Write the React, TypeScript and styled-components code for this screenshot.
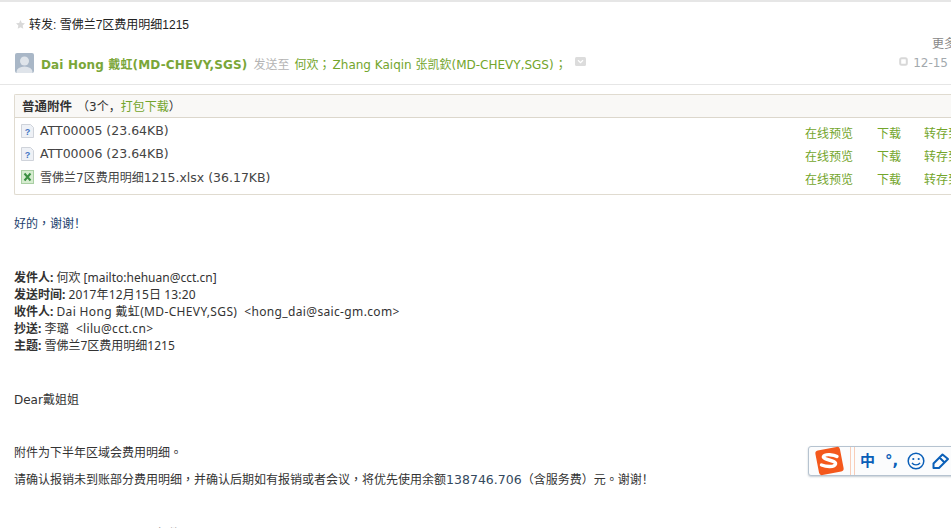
import styled, { createGlobalStyle } from "styled-components";

const GlobalStyle = createGlobalStyle`
  html, body {
    margin: 0;
    padding: 0;
    background: #fff;
    overflow: hidden;
  }
  body {
    font-family: "DejaVu Sans", "Noto Sans CJK SC", sans-serif;
    font-size: 12px;
    color: #333;
  }
`;

const Page = styled.div`
  position: relative;
  width: 951px;
  height: 528px;
  overflow: hidden;
  border-top: 2px solid #e6e6e6;
  box-sizing: border-box;
`;

const Head = styled.header`
  height: 82px;
  padding-left: 15px;
  border-bottom: 1px solid #e6e6e6;
`;

const TitleRow = styled.div`
  display: flex;
  align-items: center;
  height: 42px;
  gap: 4px;
  padding-left: 1px;
  color: #222;
  font-family: "Liberation Sans", "Noto Sans CJK SC", sans-serif;
`;

const More = styled.div`
  height: 15px;
  margin: -7px -5px 0 0;
  line-height: 15px;
  display: flex;
  justify-content: flex-end;
  color: #888;
  white-space: nowrap;
`;

const SenderRow = styled.div`
  display: flex;
  align-items: center;
  height: 22px;
  white-space: nowrap;
`;

const Avatar = styled.div`
  width: 19px;
  height: 20px;
  margin-right: 7px;
  border-radius: 2px;
  overflow: hidden;
  flex: none;
`;

const SenderName = styled.span`
  color: #7aa638;
  font-weight: 700;
  letter-spacing: 0.15px;
`;

const Gray = styled.span`
  color: #b4b4b4;
  margin-left: 6px;
`;

const Green = styled.span`
  color: #73a52c;
`;

const Recipient = styled(Green)<{ $left: number }>`
  margin-left: ${(p) => p.$left}px;
`;

const Semi = styled(Green)<{ $left: number }>`
  margin-left: ${(p) => p.$left}px;
  font-family: "Noto Sans CJK TC", sans-serif;
`;

const MailDate = styled.div`
  margin-left: auto;
  margin-right: 3px;
  display: flex;
  align-items: center;
  gap: 5px;
  color: #a3a9ad;
`;

const Attachments = styled.section`
  margin: 9px 0 0 14px;
  height: 99px;
  border: 1px solid #e0dbd0;
  border-right: none;
  border-radius: 2px 0 0 2px;
`;

const AttachHead = styled.div`
  height: 23px;
  margin-bottom: 1px;
  padding: 0 0 1px 7px;
  box-sizing: border-box;
  background: #f9f8f6;
  border-bottom: 1px solid #dcd7cc;
  display: flex;
  align-items: center;
`;

const AttachTitle = styled.strong`
  font-size: 12.5px;
  font-weight: 700;
  color: #333;
  margin-right: 5px;
`;

const AttachRow = styled.div`
  display: flex;
  align-items: center;
  height: 23px;
  padding-left: 6px;
  white-space: nowrap;
`;

const FileName = styled.span`
  margin-left: 6px;
  color: #444;
`;

const Latin = styled.span`
  font-size: 12.5px;
`;

const Actions = styled.div`
  margin-left: auto;
  margin-top: 3px;
  display: grid;
  grid-template-columns: 72px 47px 27px;
  overflow: hidden;
  color: #73a52c;
`;

const Action = styled.span`
  overflow: hidden;
`;

const Body = styled.article`
  padding: 20px 0 0 14px;
  color: #333;
`;

const Punct = styled.span`
  font-family: "Noto Sans CJK TC", sans-serif;
`;

const Reply = styled.p`
  margin: 0;
  color: #1d3f6e;
  line-height: 16px;
`;

const Meta = styled.div`
  margin-top: 37px;
  line-height: 17px;
  font-family: "Noto Sans", "Noto Sans CJK SC", sans-serif;
`;

const MetaLine = styled.div`
  white-space: nowrap;
`;

const MetaValue = styled.span<{ $spacing?: number }>`
  letter-spacing: ${(p) => p.$spacing ?? 0}px;
`;

const Para = styled.p<{ $top: number }>`
  margin: ${(p) => p.$top}px 0 0;
  line-height: 18px;
  white-space: nowrap;
`;

const Amount = styled.span`
  font-size: 12.5px;
  color: #34495e;
`;

const NextMail = styled.div`
  margin-top: 37px;
  display: flex;
  align-items: flex-start;
  padding-left: 18px;
  color: #999;
  line-height: 16px;
`;

const NextAvatar = styled.div`
  width: 12px;
  height: 12px;
  margin: 2px 88px 0 0;
  border-radius: 50%;
  background: #a8d4e4;
`;

const ImeBar = styled.div`
  position: absolute;
  left: 808px;
  top: 444px;
  width: 160px;
  height: 28px;
  display: flex;
  align-items: center;
  background: #fbfcfd;
  border: 1px solid #b6c3d0;
  border-radius: 3px;
  box-shadow: 0 1px 2px rgba(90, 110, 130, 0.35);
`;

const ImeLogoWrap = styled.div`
  width: 41px;
  height: 28px;
  display: flex;
  align-items: center;
  justify-content: center;
  flex: none;
  border-right: 1px solid #f8cdb8;
`;

const ImeRule = styled.div`
  width: 2px;
  height: 28px;
  margin-left: 1px;
  border-right: 1px solid #f8cdb8;
  flex: none;
`;

const ImeItems = styled.div`
  display: flex;
  align-items: center;
  padding-left: 5px;
  color: #0a5fb8;
`;

const ImeChar = styled.span<{ $width: number }>`
  font-weight: 700;
  font-size: 15px;
  line-height: 20px;
  width: ${(p) => p.$width}px;
`;

function AvatarIcon() {
  return (
    <svg width="19" height="20" viewBox="0 0 19 20" style={{ display: "block" }}>
      <rect width="19" height="20" fill="#a9b7c7" />
      <circle cx="9.5" cy="8" r="4.5" fill="#dfe4ea" />
      <ellipse cx="9.5" cy="19" rx="8" ry="5.5" fill="#dfe4ea" />
    </svg>
  );
}

function StarIcon() {
  return (
    <svg width="9" height="9" viewBox="0 0 10 10" style={{ marginTop: 3 }}>
      <path d="M5 0l1.5 3.3 3.5.4-2.6 2.4.7 3.6L5 8 1.9 9.7l.7-3.6L0 3.7l3.5-.4z" fill="#d9d9d9" />
    </svg>
  );
}

function FileIcon({ excel }: { excel?: boolean }) {
  if (excel) {
    return (
      <svg width="13" height="14" viewBox="0 0 13 14">
        <rect x="0.5" y="0.5" width="12" height="13" fill="#d6ecd0" stroke="#a9cfa3" />
        <path d="M3.5 3.5l6 7M9.5 3.5l-6 7" stroke="#3a8f42" strokeWidth="2" />
      </svg>
    );
  }
  return (
    <svg width="13" height="14" viewBox="0 0 13 14">
      <path d="M.5.5h9l3 3v10H.5z" fill="#eef1f6" stroke="#cfd3da" />
      <text x="6.5" y="11" fontSize="9" fontWeight="700" textAnchor="middle" fill="#3f74c4" fontFamily="Liberation Sans">?</text>
    </svg>
  );
}

function MoreIcon() {
  return (
    <svg width="11" height="9" viewBox="0 0 11 9" style={{ marginLeft: 8, marginTop: -3 }}>
      <rect width="11" height="9" rx="1.5" fill="#dcdcdc" />
      <path d="M3 3.2l2.5 2.4L8 3.2" fill="none" stroke="#fff" strokeWidth="1.2" />
    </svg>
  );
}

function DateIcon() {
  return (
    <svg width="9" height="9" viewBox="0 0 9 9" style={{ marginTop: -4 }}>
      <rect x="1.2" y="1.2" width="6.6" height="6.6" rx="1.5" fill="#fff" stroke="#d8d8d8" strokeWidth="2" />
    </svg>
  );
}

function ImeLogo() {
  return (
    <svg width="33" height="30" viewBox="0 0 33 30">
      <rect x="4" y="2.5" width="25" height="25" rx="3" fill="#f4581c" transform="rotate(-11 16.5 15)" />
      <path d="M24 10.5c-3-1.800-12-3-13.500 0-1.500 3.500 13 3.500 12 7.500-1 3.500-9 3-14 1" fill="none" stroke="#fff" strokeWidth="3.4" strokeLinecap="round" />
    </svg>
  );
}

function SmileIcon() {
  return (
    <svg width="18" height="18" viewBox="0 0 18 18">
      <circle cx="9" cy="9" r="7.8" fill="none" stroke="#0a5fb8" strokeWidth="1.5" />
      <circle cx="6.3" cy="7" r="1.1" fill="#0a5fb8" />
      <circle cx="11.7" cy="7" r="1.1" fill="#0a5fb8" />
      <path d="M5 10.8c1.500 2.800 6.500 2.800 8 0" fill="none" stroke="#0a5fb8" strokeWidth="1.4" />
    </svg>
  );
}

function PencilIcon() {
  return (
    <svg width="18" height="18" viewBox="0 0 18 18" style={{ marginLeft: 7 }}>
      <path d="M1.5 11.500L10.500 2.500 16 7 7 16H1.500z M7.500 5.500L12.500 10.500" fill="none" stroke="#0a5fb8" strokeWidth="2" strokeLinejoin="round" />
    </svg>
  );
}

const files = [
  { name: "", latin: "ATT00005 (23.64KB)" },
  { name: "", latin: "ATT00006 (23.64KB)" },
  { name: "雪佛兰7区费用明细", latin: "1215.xlsx (36.17KB)", excel: true },
];

export default function App() {
  return (
    <Page>
      <GlobalStyle />
      <Head>
        <TitleRow>
          <StarIcon />
          <span>转发: 雪佛兰7区费用明细1215</span>
        </TitleRow>
        <More>更多</More>
        <SenderRow>
          <Avatar>
            <AvatarIcon />
          </Avatar>
          <SenderName>Dai Hong 戴虹(MD-CHEVY,SGS)</SenderName>
          <Gray>发送至</Gray>
          <Recipient $left={5}>何欢</Recipient>
          <Semi $left={0}>；</Semi>
          <Recipient $left={2}>Zhang Kaiqin 张凯欽(MD-CHEVY,SGS)</Recipient>
          <Semi $left={1}>；</Semi>
          <MoreIcon />
          <MailDate>
            <DateIcon />
            12-15
          </MailDate>
        </SenderRow>
      </Head>
      <Attachments>
        <AttachHead>
          <AttachTitle>普通附件</AttachTitle>（3个，<Green>打包下载</Green>）
        </AttachHead>
        {files.map((f) => (
          <AttachRow key={f.latin}>
            <FileIcon excel={f.excel} />
            <FileName>
              {f.name}
              <Latin>{f.latin}</Latin>
            </FileName>
            <Actions>
              <Action>在线预览</Action>
              <Action>下载</Action>
              <Action>转存到</Action>
            </Actions>
          </AttachRow>
        ))}
      </Attachments>
      <Body>
        <Reply>好的<Punct>，</Punct>谢谢！</Reply>
        <Meta>
          <MetaLine><b>发件人:</b> 何欢 [mailto:hehuan@cct.cn]</MetaLine>
          <MetaLine><b>发送时间:</b> <MetaValue $spacing={0.15}>2017年12月15日 13:20</MetaValue></MetaLine>
          <MetaLine><b>收件人:</b> <MetaValue $spacing={0.35}>Dai Hong 戴虹(MD-CHEVY,SGS)&nbsp; &lt;hong_dai@saic-gm.com&gt;</MetaValue></MetaLine>
          <MetaLine><b>抄送:</b> <MetaValue $spacing={0.3}>李璐&nbsp; &lt;lilu@cct.cn&gt;</MetaValue></MetaLine>
          <MetaLine><b>主题:</b> 雪佛兰7区费用明细1215</MetaLine>
        </Meta>
        <Para $top={37}>Dear戴姐姐</Para>
        <Para $top={34}>附件为下半年区域会费用明细<Punct>。</Punct></Para>
        <Para $top={8}>
          请确认报销未到账部分费用明细<Punct>，</Punct>并确认后期如有报销或者会议<Punct>，</Punct>将优先使用余额
          <Amount>138746.706</Amount>（含服务费）元<Punct>。</Punct>谢谢！
        </Para>
        <NextMail>
          <NextAvatar />
          <span>展开邮件</span>
        </NextMail>
      </Body>
      <ImeBar>
        <ImeLogoWrap>
          <ImeLogo />
        </ImeLogoWrap>
        <ImeRule />
        <ImeItems>
          <ImeChar $width={25}>中</ImeChar>
          <ImeChar $width={22}>°,</ImeChar>
          <SmileIcon />
          <PencilIcon />
        </ImeItems>
      </ImeBar>
    </Page>
  );
}
